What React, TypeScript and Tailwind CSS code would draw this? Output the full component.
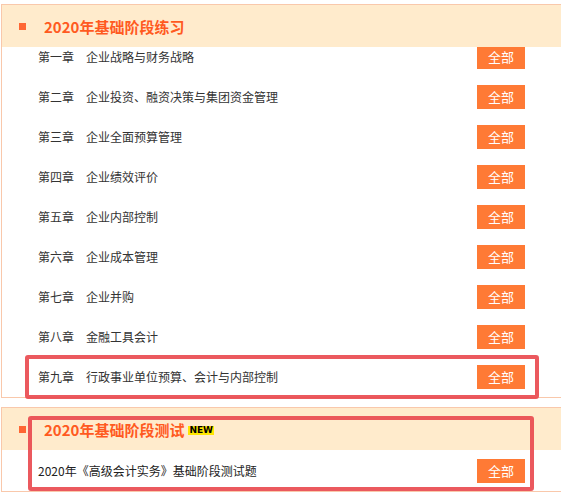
const chapters: [string, string][] = [
  ["第一章", "企业战略与财务战略"],
  ["第二章", "企业投资、融资决策与集团资金管理"],
  ["第三章", "企业全面预算管理"],
  ["第四章", "企业绩效评价"],
  ["第五章", "企业内部控制"],
  ["第六章", "企业成本管理"],
  ["第七章", "企业并购"],
  ["第八章", "金融工具会计"],
  ["第九章", "行政事业单位预算、会计与内部控制"],
];

const font = { fontFamily: '"Noto Sans CJK SC", "Noto Sans", sans-serif' };

const AllButton = () => (
  <a className="ml-auto flex h-[24px] w-[48px] items-center justify-center bg-[#ff7a35] text-[13px] text-white">
    全部
  </a>
);

const PanelHeader = ({ title, isNew }: { title: string; isNew?: boolean }) => (
  <div className="relative z-10 flex h-[42px] items-center bg-[#ffebcc] pl-[17px]">
    <span className="h-[7px] w-[7px] bg-[#ff6633]" />
    <h3 className="ml-[18px] text-[15px] font-bold leading-none text-[#ff5a1f]">{title}</h3>
    {isNew && (
      <span
        className="ml-[4px] mt-[2px] bg-[#ffe600] px-[1px] text-[9px] font-bold leading-[9px] text-black"
        style={{ fontFamily: '"DejaVu Sans", sans-serif' }}
      >
        NEW
      </span>
    )}
  </div>
);

export default function App() {
  return (
    <div className="relative h-[493px] w-[561px] overflow-hidden bg-white" style={font}>
      <div className="pl-[1px] pt-[4px]">
        <section className="w-[600px] border-y border-l border-[#f9c8ab]">
          <PanelHeader title="2020年基础阶段练习" />
          <ul className="-mt-[2px] flex flex-col gap-[16px] pb-[8px]">
            {chapters.map(([no, name]) => (
              <li key={no} className="flex h-[24px] w-[523px] items-center pl-[36px] text-[12px] text-[#333]">
                <span className="w-[48px]">{no}</span>
                <span>{name}</span>
                <AllButton />
              </li>
            ))}
          </ul>
        </section>

        <section className="mt-[9px] w-[600px] border-y border-l border-[#f9c8ab]">
          <PanelHeader title="2020年基础阶段测试" isNew />
          <ul className="mt-[9px] pb-[8px]">
            <li className="flex h-[24px] w-[523px] items-center pl-[36px] text-[12px] text-[#222]">
              <span>2020年《高级会计实务》基础阶段测试题</span>
              <AllButton />
            </li>
          </ul>
        </section>
      </div>

      {/* annotation boxes */}
      <div className="absolute left-[25px] top-[355px] z-20 h-[44px] w-[514px] rounded-[3px] border-[4px] border-[#e9474d]/90" />
      <div className="absolute left-[28px] top-[416px] z-20 h-[75px] w-[506px] rounded-[3px] border-[4px] border-[#e9474d]/90" />
    </div>
  );
}
